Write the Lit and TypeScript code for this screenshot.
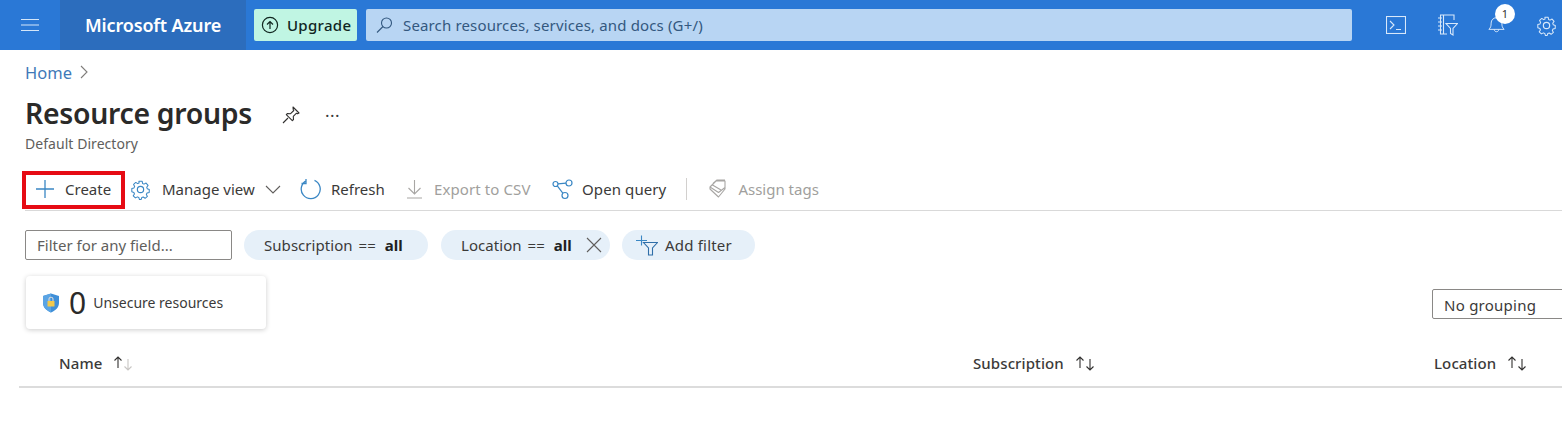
import { LitElement, html, css, svg } from 'lit';
import { customElement } from 'lit/decorators.js';

const gear = (size: number, color: string) => html`
    <svg width=${size} height=${size} viewBox="0 0 20 20" fill="none" stroke=${color} stroke-width="1.1" stroke-linejoin="round">
        <path d="M8.300 1.200h3.400l.5 2.400 1.500.7 2.200-1.100 2.100 2.400-1.400 2 .5 1.500 2.200.9-.1 3.100-2.300.6-.7 1.500 1.100 2.100-2.400 2-2-1.300-1.500.5-.8 2.200H8.900l-.7-2.300-1.500-.6-2.100 1.100-2.300-2.200 1.300-2-.6-1.500-2.200-.8V8.900l2.300-.6.7-1.500-1.100-2.200 2.300-2.100 2 1.300 1.500-.6z" transform="translate(1 1) scale(.9)" />
        <circle cx="10" cy="10" r="3" />
    </svg>
`;

// arrows for the table headers, the second colour is the inactive direction
const sortIcon = (up: string, down: string) => html`
    <svg width="22" height="18" viewBox="0 0 22 18" fill="none" stroke-width="1.1">
        <path d="M6 14V3M2.500 6.500 6 3l3.500 3.500" stroke=${up} />
        <path d="M16 5v11M12.500 12.500 16 16l3.500-3.500" stroke=${down} />
    </svg>
`;

const BLUE = '#3a87c4';
const GREY = '#a8a6a4';

@customElement('app-root')
export class AppRoot extends LitElement {
    public static override styles = css`
        :host {
            display: block;
            width: 1562px;
            height: 428px;
            overflow: hidden;
            background: #fff;
            font-family: 'Noto Sans', 'Open Sans', sans-serif;
            font-size: 15px;
            color: #3b3a39;
        }
        svg {
            display: block;
            flex: none;
        }

        /* top bar */
        .topbar {
            display: flex;
            align-items: center;
            height: 50px;
            background: #2a78d6;
        }
        .burger {
            width: 60px;
            display: flex;
            justify-content: center;
        }
        .brand {
            width: 186px;
            height: 50px;
            box-sizing: border-box;
            padding-left: 25px;
            display: flex;
            align-items: center;
            background: #2c6dbd;
            color: #fff;
            font-size: 18px;
            font-weight: 600;
            letter-spacing: -0.15px;
            white-space: nowrap;
        }
        .upgrade {
            margin-left: 8px;
            width: 103px;
            height: 32px;
            box-sizing: border-box;
            padding-left: 7px;
            display: flex;
            align-items: center;
            gap: 8px;
            background: #c0f5e3;
            border-radius: 2px;
            color: #10261f;
            font-size: 15px;
            font-weight: 500;
            letter-spacing: 0.3px;
        }
        .search {
            margin-left: 9px;
            width: 986px;
            height: 32px;
            box-sizing: border-box;
            padding-left: 10px;
            display: flex;
            align-items: center;
            gap: 10px;
            background: #b8d5f3;
            border-radius: 2px;
            color: #33587f;
            font-size: 15px;
            letter-spacing: 0.15px;
        }
        .top-icons {
            display: flex;
            align-items: center;
            margin-left: 34px;
        }
        .filter-icon {
            margin-left: 31px;
        }
        .bell {
            position: relative;
            margin-left: 30px;
            margin-top: -3px;
        }
        .badge {
            position: absolute;
            top: -10px;
            left: 7px;
            width: 20px;
            height: 20px;
            border-radius: 50%;
            background: #fff;
            color: #323130;
            font-size: 11px;
            line-height: 20px;
            text-align: center;
        }
        .top-gear {
            margin-left: 31px;
        }

        /* page heading */
        .page {
            padding-left: 25px;
        }
        .crumbs {
            display: flex;
            align-items: center;
            gap: 8px;
            height: 24px;
            margin-top: 10px;
            color: #3f79b8;
            font-size: 16.500px;
        }
        .heading {
            display: flex;
            align-items: center;
            height: 40px;
            margin-top: 9px;
        }
        h1 {
            margin: 0;
            font-size: 28.400px;
            font-weight: 600;
            line-height: 40px;
            letter-spacing: -0.3px;
            color: #2b2a29;
        }
        .pin {
            margin: 4px 0 0 30px;
        }
        .more {
            margin: 5px 0 0 25px;
            font-size: 17px;
            letter-spacing: 0.5px;
            line-height: 14px;
        }
        .sub {
            height: 20px;
            line-height: 20px;
            margin-top: 1px;
            color: #605e5c;
            font-size: 14px;
            letter-spacing: 0.05px;
        }

        /* command bar */
        .toolbar {
            display: flex;
            align-items: center;
            height: 38px;
            padding-bottom: 2px;
            margin-top: 16px;
            border-bottom: 1px solid #d9d9d9;
            white-space: nowrap;
        }
        .cmd {
            display: flex;
            align-items: center;
            flex: none;
        }
        .cmd.off {
            color: #a19f9d;
        }
        .create {
            position: relative;
            width: 105px;
            height: 38px;
            box-sizing: border-box;
            padding-left: 10px;
            gap: 10px;
        }
        /* the annotation drawn over the screenshot */
        .create::after {
            content: '';
            position: absolute;
            left: -3px;
            top: 1px;
            width: 103px;
            height: 38px;
            box-sizing: border-box;
            border: 4px solid #e60b14;
            pointer-events: none;
        }
        .manage {
            width: 170px;
            gap: 11px;
        }
        .refresh {
            width: 106px;
            gap: 9px;
        }
        .export {
            width: 146px;
            gap: 11px;
            letter-spacing: 0.1px;
        }
        .query {
            gap: 9px;
            letter-spacing: 0.1px;
        }
        .tags {
            gap: 11px;
        }
        .chevron {
            margin-left: -1px;
        }
        .divider {
            width: 1px;
            height: 22px;
            background: #d2d0ce;
            margin: 0 22px 0 20px;
            flex: none;
        }

        /* filters */
        .filters {
            display: flex;
            align-items: center;
            height: 30px;
            margin-top: 19px;
        }
        .input {
            width: 207px;
            height: 30px;
            box-sizing: border-box;
            padding-left: 11px;
            border: 1px solid #8a8886;
            border-radius: 2px;
            line-height: 28px;
            color: #605e5c;
        }
        .pill {
            display: flex;
            align-items: center;
            height: 30px;
            box-sizing: border-box;
            margin-left: 12px;
            border-radius: 15px;
            background: #e6f0f9;
            white-space: nowrap;
        }
        .pill b {
            font-weight: 700;
            margin-left: 9px;
            color: #201f1e;
        }
        .pill span {
            word-spacing: 2px;
            letter-spacing: 0.05px;
        }
        .subscription {
            width: 184px;
            padding-left: 20px;
        }
        .location {
            width: 169px;
            padding: 0 8px 0 20px;
            margin-left: 13px;
            justify-content: space-between;
        }
        .location div {
            display: flex;
        }
        .add {
            width: 133px;
            padding-left: 14px;
            gap: 7px;
            letter-spacing: 0.2px;
        }

        /* summary + grouping */
        .summary {
            display: flex;
            align-items: flex-start;
            justify-content: space-between;
            margin-top: 16px;
        }
        .card {
            display: flex;
            align-items: center;
            width: 240px;
            height: 53px;
            box-sizing: border-box;
            margin-left: 1px;
            padding-left: 16px;
            border-radius: 4px;
            background: #fff;
            box-shadow: 0 1px 5px rgba(0, 0, 0, 0.2);
        }
        .count {
            font-size: 30px;
            line-height: 53px;
            margin-left: 9px;
            margin-right: 7px;
            color: #2b2a29;
        }
        .label {
            font-size: 14px;
        }
        .grouping {
            width: 160px;
            height: 30px;
            box-sizing: border-box;
            margin-top: 13px;
            margin-right: -30px;
            padding-left: 11px;
            border: 1px solid #8a8886;
            border-radius: 2px;
            line-height: 30px;
            letter-spacing: 0.25px;
        }

        /* table header */
        .thead {
            display: grid;
            grid-template-columns: 914px 461px 1fr;
            align-items: center;
            height: 34px;
            padding: 0 0 6px 40px;
            margin: 17px 0 0 -6px;
            border-bottom: 2px solid #dcdcdc;
            font-weight: 500;
            letter-spacing: 0.1px;
        }
        .th {
            display: flex;
            align-items: center;
            gap: 10px;
        }
    `;

    override render() {
        return html`
            <header class="topbar">
                <div class="burger">
                    <svg width="20" height="14" viewBox="0 0 20 14" stroke="#d4e6f9" stroke-width="1.1">
                        <path d="M1 1.500h18M1 7h18M1 12.500h18" />
                    </svg>
                </div>
                <div class="brand">Microsoft Azure</div>
                <div class="upgrade">
                    <svg width="18" height="18" viewBox="0 0 18 18" fill="none" stroke="#10261f" stroke-width="1.2">
                        <circle cx="9" cy="9" r="7.600" />
                        <path d="M9 13V5.500M6 8.500l3-3 3 3" />
                    </svg>
                    Upgrade
                </div>
                <div class="search">
                    <svg width="17" height="17" viewBox="0 0 17 17" fill="none" stroke="#33587f" stroke-width="1.1">
                        <circle cx="10.500" cy="6" r="5" />
                        <path d="M7 9.500 1 15.500" />
                    </svg>
                    Search resources, services, and docs (G+/)
                </div>
                <div class="top-icons">
                    <svg width="20" height="18" viewBox="0 0 20 18" fill="none" stroke="#d8e8fa" stroke-width="1.1">
                        <rect x=".5" y=".5" width="19" height="17" />
                        <path d="m4 5 4 4-4 4M10 13.500h5" />
                    </svg>
                    <svg class="filter-icon" width="21" height="22" viewBox="0 0 21 22" fill="none" stroke="#d8e8fa" stroke-width="1.1">
                        <path d="M17 6V1H3.500v19H10M6.500 1v19M1 4h4M1 8h4M1 12h4M1 16h4" />
                        <path d="M9 9.500h11.500l-4.500 5v6.500l-2.500-1.500v-5z" />
                    </svg>
                    <div class="bell">
                        <svg width="17" height="20" viewBox="0 0 19 20" fill="none" stroke="#d8e8fa" stroke-width="1.1">
                            <path d="M1 16h17c-2-2-2.500-3.500-2.500-7 0-3.500-2.500-6-6-6s-6 2.500-6 6c0 3.500-.5 5-2.500 7zM7 16c0 3.500 5 3.500 5 0" />
                        </svg>
                        <div class="badge">1</div>
                    </div>
                    <div class="top-gear">${gear(21, '#d8e8fa')}</div>
                </div>
            </header>

            <main class="page">
                <nav class="crumbs">
                    Home
                    <svg width="8" height="14" viewBox="0 0 8 14" fill="none" stroke="#7f7d7b" stroke-width="1.1"><path d="m1 1 6 6-6 6" /></svg>
                </nav>
                <div class="heading">
                    <h1>Resource groups</h1>
                    <svg class="pin" width="18" height="18" viewBox="0 0 18 18" fill="none" stroke="#323130" stroke-width="1.1" stroke-linejoin="round">
                        <path d="m11 1 6 6-1.500.8-1-.6-3.200 3.200.2 3.100-1.200 1.200-6-6 1.200-1.200 3.100.2 3.200-3.200-.6-1zM6 12l-5 5" />
                    </svg>
                    <div class="more">···</div>
                </div>
                <div class="sub">Default Directory</div>

                <div class="toolbar">
                    <div class="cmd create">
                        <svg width="20" height="20" viewBox="0 0 20 20" stroke=${BLUE} stroke-width="1.3"><path d="M10 1v18M1 10h18" /></svg>
                        Create
                    </div>
                    <div class="cmd manage">
                        ${gear(21, BLUE)}
                        <span>Manage view</span>
                        <svg class="chevron" width="16" height="9" viewBox="0 0 16 9" fill="none" stroke="#605e5c" stroke-width="1.1"><path d="m1 1 7 7 7-7" /></svg>
                    </div>
                    <div class="cmd refresh">
                        <svg width="22" height="22" viewBox="0 0 22 22" fill="none" stroke=${BLUE} stroke-width="1.3">
                            <path d="M14.500 2.400a9.500 9.500 0 1 1-8 .2M6 1v4.500H1.500" />
                        </svg>
                        Refresh
                    </div>
                    <div class="cmd off export">
                        <svg width="17" height="20" viewBox="0 0 17 20" fill="none" stroke=${GREY} stroke-width="1.1"><path d="M8.500 1v13M2.500 9l6 6 6-6M1 19h15" /></svg>
                        Export to CSV
                    </div>
                    <div class="cmd query">
                        <svg width="21" height="21" viewBox="0 0 21 21" fill="none" stroke=${BLUE} stroke-width="1.2">
                            <circle cx="3.500" cy="5" r="2.500" /><circle cx="17" cy="4" r="3" /><circle cx="13" cy="16.500" r="3" />
                            <path d="M6 4.800 14 4.200M5.300 6.800l5.700 7.500" />
                        </svg>
                        Open query
                    </div>
                    <div class="divider"></div>
                    <div class="cmd off tags">
                        <svg width="18" height="20" viewBox="0 0 18 20" fill="none" stroke=${GREY} stroke-width="1.1" stroke-linejoin="round">
                            <path d="M1 8 7 2h9v8l-6.500 8L1 10zM4 4.500 8 1h8M1 8l8.500 5.500 6.500-5M3.500 6l8.500 5" />
                        </svg>
                        Assign tags
                    </div>
                </div>

                <div class="filters">
                    <div class="input">Filter for any field...</div>
                    <div class="pill subscription"><span>Subscription ==</span><b>all</b></div>
                    <div class="pill location">
                        <div><span>Location ==</span><b>all</b></div>
                        <svg width="16" height="16" viewBox="0 0 16 16" stroke="#605e5c" stroke-width="1.1"><path d="m1 1 14 14M15 1 1 15" /></svg>
                    </div>
                    <div class="pill add">
                        <svg width="22" height="21" viewBox="0 0 22 21" fill="none" stroke-width="1.1">
                            <path d="M0 5.500h11M5.500 .5v10" stroke=${BLUE} />
                            <path d="M7.500 7.500h14l-5 5.500v7h-4v-7z" stroke="#2f6ea8" />
                        </svg>
                        Add filter
                    </div>
                </div>

                <div class="summary">
                    <div class="card">
                        <svg width="18" height="20" viewBox="0 0 18 20">
                            ${svg`<path d="M9 .5 17 3v7c0 4.500-3.500 7.500-8 9.500C4.500 17.500 1 14.500 1 10V3z" fill="#3f8fd8" />
                            <path d="M9 .5 1 3v7c0 4.500 3.500 7.500 8 9.500z" fill="#5aa4e4" />
                            <rect x="5.500" y="8" width="7" height="5.500" rx=".6" fill="#f2c94c" />
                            <path d="M7 8V6.300a2 2 0 0 1 4 0V8" fill="none" stroke="#d8d8d8" stroke-width="1.1" />`}
                        </svg>
                        <span class="count">0</span>
                        <span class="label">Unsecure resources</span>
                    </div>
                    <div class="grouping">No grouping</div>
                </div>

                <div class="thead">
                    <div class="th">Name ${sortIcon('#323130', '#c8c6c4')}</div>
                    <div class="th">Subscription ${sortIcon('#323130', '#323130')}</div>
                    <div class="th">Location ${sortIcon('#323130', '#323130')}</div>
                </div>
            </main>
        `;
    }
}
